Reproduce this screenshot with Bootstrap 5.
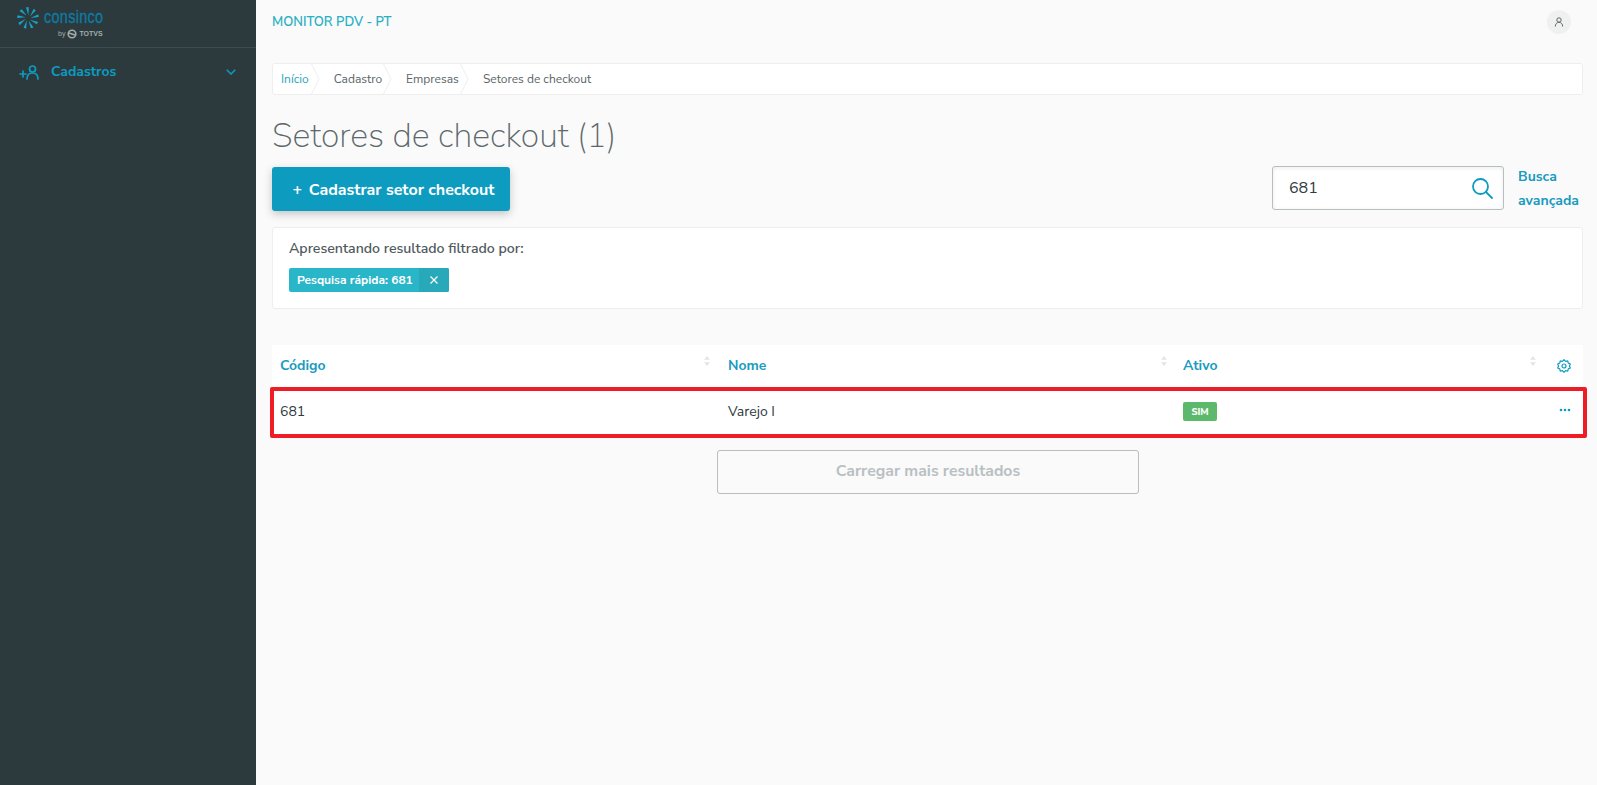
<!DOCTYPE html>
<html lang="pt">
<head>
<meta charset="utf-8">
<title>Setores de checkout</title>
<link href="https://cdn.jsdelivr.net/npm/bootstrap@5.3.0/dist/css/bootstrap.min.css" rel="stylesheet">
<style>
html,body{height:100%}
body{background:#fafafa;font-family:"Nunito Sans","Lato","Open Sans",sans-serif;color:#4a5558;font-size:14px;overflow:hidden}
.shell{height:785px}
.side{width:256px;flex:none;background:#2c3a3d}
.side-logo{height:48px;border-bottom:1px solid #3f4c4f;padding:7px 0 0 17px}
.logo-word{font-family:"Liberation Sans",sans-serif;font-size:19px;line-height:20px;color:#0f79a3;letter-spacing:.4px;margin-left:1px;transform:scaleX(.76);transform-origin:left center;-webkit-text-stroke:.35px #0f79a3}
.logo-sub{font-family:"Liberation Sans",sans-serif;font-size:7px;line-height:10px;color:#a5abac;padding-left:15px;font-weight:700;margin-top:2px;gap:2px}
.side-item{padding:13px 20px 0 19px;color:#0d9bc0;font-size:14px;font-weight:700}
.side-label{width:32px}
.main-area{padding:0 14px 0 16px;min-width:0}
.top-row{height:63px;padding-top:12px}
.app-title{font-size:13px;font-weight:600;color:#29b0c4;line-height:20px}
.avatar{width:24px;height:24px;border-radius:50%;background:#f0f0f0;margin:-2px 12px 0 0}
.crumbs{height:32px;background:#fff;border:1px solid #eeeeee;border-radius:3px;font-size:12px;overflow:hidden;margin:0}
.crumb{padding:0 10px 0 8px;line-height:30px;color:#5b6568;position:relative}
.crumb+.crumb{padding-left:14px}
.crumb-tip{position:absolute;right:-1px;top:-1px;width:10px;height:32px}
.crumb-first{color:#2aa3bd;padding-right:11px}
.page-title{font-size:34px;font-weight:200;color:#5d686b;line-height:44px;margin:19px 0 9px}
.act-add{width:238px;height:44px;background:#0d9bc0;color:#fff;font-size:16px;font-weight:700;border:0;border-radius:3px;box-shadow:0 3px 8px rgba(0,0,0,.22)}
.act-add:hover{background:#0d9bc0;color:#fff}
.act-add-in{padding:1px 0 0 5px}
.act-plus{margin-right:-2px}
.find{width:232px;height:44px;background:#fff;border:1px solid #b6bec0;border-radius:3px;padding:0 10px 0 16px;margin-top:-1px;box-shadow:inset 0 1px 4px rgba(0,0,0,.08);font-size:16px;color:#2f3a3d}
.find-more{width:65px;margin-left:14px;color:#1a9bc0;font-size:14px;font-weight:700;line-height:24px;margin-top:-2px}
.filter-box{height:82px;background:#fff;border:1px solid #eeeeee;border-radius:3px;margin-top:14px;padding:11px 16px}
.filter-title{font-size:14.100px;font-weight:600;color:#4f5a5d;line-height:20px}
.chip{margin-top:9px;height:24px;border-radius:2px;background:#29b6c8;color:#fff;font-size:12px;font-weight:700;line-height:24px;overflow:hidden;width:160px}
.chip-text{padding-left:8px;flex:1}
.chip-x{width:30px;background:#27a9ba}
.grid-wrap{margin-top:36px;position:relative}
.grid-table{table-layout:fixed;width:100%;margin:0;--bs-table-bg:#fff;--bs-table-color:#2f3a3d}
.grid-table th{height:43px;color:#1a9bc0;font-size:14px;font-weight:700;padding:0 12px 3px 8px;vertical-align:middle;border-bottom:0;position:relative}
.grid-table td{height:46px;padding:1px 12px 0 8px;vertical-align:middle;font-size:14px;border-bottom:1px solid #eeeeee}
.sorter{position:absolute;right:8px;top:11px;width:6px;height:10px}
.grid-table th:first-child .sorter{right:10px}
.tag-yes{background:#5cb96b;color:#fff;font-size:9.500px;font-weight:800;border-radius:2px;width:34px;height:19px;line-height:19px;text-align:center;margin-top:1px}
.row-dots{margin-bottom:4px}
.mark-box{position:absolute;left:-2px;right:-4px;top:42px;height:51px;border:4px solid #ee1c25;border-radius:2px;pointer-events:none}
.more-wrap{margin-top:15px;padding-left:445px}
.more-btn{width:422px;height:44px;background:transparent;border:1px solid #b6bec0;border-radius:3px;color:#b9c0c2;font-size:15.800px;font-weight:700}
</style>
</head>
<body>
<div class="d-flex shell">
  <aside class="side">
    <div class="side-logo d-flex">
      <svg width="22" height="22" viewBox="0 0 22 22" class="me-1 flex-shrink-0" fill="#19a3c9">
        <path id="ray" d="M11.400 8.500 9 .2l2.800.1z"/>
        <use href="#ray" transform="rotate(42 11 11)"/>
        <use href="#ray" transform="rotate(80 11 11)"/>
        <use href="#ray" transform="rotate(122 11 11)"/>
        <use href="#ray" transform="rotate(160 11 11)"/>
        <use href="#ray" transform="rotate(200 11 11)"/>
        <use href="#ray" transform="rotate(240 11 11)"/>
        <use href="#ray" transform="rotate(280 11 11)"/>
        <use href="#ray" transform="rotate(320 11 11)"/>
      </svg>
      <div>
        <div class="logo-word">consinco</div>
        <div class="logo-sub d-flex align-items-center"><span class="fw-normal">by</span>
          <svg width="10" height="10" viewBox="0 0 10 10" fill="none" stroke="#a5abac" stroke-width="1.600"><circle cx="5" cy="5" r="3.800"/><path d="M2 4 8 6"/></svg>
          <span>TOTVS</span></div>
      </div>
    </div>
    <div class="side-item d-flex align-items-center">
      <span class="side-label d-flex">
        <svg width="20" height="16" viewBox="0 0 20 16" fill="none" stroke="#0d9bc0" stroke-width="1.700" stroke-linecap="round"><path d="M1 10h6M4 7v6"/><circle cx="13.500" cy="5" r="3"/><path d="M8 15c0-4 2.500-6 5.500-6s5.500 2 5.500 6"/></svg>
      </span>
      <span class="flex-grow-1">Cadastros</span>
      <svg width="10" height="6" viewBox="0 0 10 6" fill="none" stroke="#0d9bc0" stroke-width="1.500"><path d="M.7.7 5 5l4.300-4.300"/></svg>
    </div>
  </aside>
  <main class="flex-grow-1 main-area">
    <div class="top-row d-flex justify-content-between">
      <div class="app-title">MONITOR PDV - PT</div>
      <div class="avatar d-flex align-items-center justify-content-center">
        <svg width="10" height="10" viewBox="0 0 10 10" fill="none" stroke="#5d686b" stroke-width="1"><circle cx="5" cy="3" r="2.200"/><path d="M1.300 9.500C1.300 7 3 5.300 5 5.300S8.700 7 8.700 9.500"/></svg>
      </div>
    </div>
    <nav class="crumbs d-flex">
      <span class="crumb crumb-first">Início<svg class="crumb-tip" viewBox="0 0 10 32" fill="none" stroke="#eeeeee"><path d="M0 0 8 16 0 32"/></svg></span>
      <span class="crumb">Cadastro<svg class="crumb-tip" viewBox="0 0 10 32" fill="none" stroke="#eeeeee"><path d="M0 0 8 16 0 32"/></svg></span>
      <span class="crumb">Empresas<svg class="crumb-tip" viewBox="0 0 10 32" fill="none" stroke="#eeeeee"><path d="M0 0 8 16 0 32"/></svg></span>
      <span class="crumb">Setores de checkout</span>
    </nav>
    <h1 class="page-title">Setores de checkout (1)</h1>
    <div class="d-flex justify-content-between">
      <button type="button" class="btn act-add p-0"><span class="act-add-in d-block"><span class="act-plus">+</span>&nbsp; Cadastrar setor checkout</span></button>
      <div class="d-flex">
        <div class="find d-flex align-items-center justify-content-between">
          <span>681</span>
          <svg width="22" height="22" viewBox="0 0 22 22" fill="none" stroke="#0d9bc0" stroke-width="1.800" stroke-linecap="round"><circle cx="9.500" cy="9.500" r="7.500"/><path d="M15 15l6 6"/></svg>
        </div>
        <div class="find-more">Busca avançada</div>
      </div>
    </div>
    <section class="filter-box">
      <div class="filter-title">Apresentando resultado filtrado por:</div>
      <div class="chip d-flex">
        <span class="chip-text text-nowrap">Pesquisa rápida: 681</span>
        <span class="chip-x d-flex align-items-center justify-content-center">
          <svg width="8" height="8" viewBox="0 0 8 8" stroke="#fff" stroke-width="1.200"><path d="M.5.5l7 7M7.500.5l-7 7"/></svg>
        </span>
      </div>
    </section>
    <div class="grid-wrap">
      <table class="table grid-table">
        <colgroup><col style="width:448px"><col style="width:455px"><col style="width:369px"><col></colgroup>
        <thead>
          <tr>
            <th>Código<svg class="sorter" viewBox="0 0 7 12" fill="#e2e5e6"><path d="M3.500 0 7 4.500H0zM3.500 12 0 7.500h7z"/></svg></th>
            <th>Nome<svg class="sorter" viewBox="0 0 7 12" fill="#e2e5e6"><path d="M3.500 0 7 4.500H0zM3.500 12 0 7.500h7z"/></svg></th>
            <th>Ativo<svg class="sorter" viewBox="0 0 7 12" fill="#e2e5e6"><path d="M3.500 0 7 4.500H0zM3.500 12 0 7.500h7z"/></svg></th>
            <th class="text-end">
              <svg width="14" height="14" viewBox="0 0 14 14" fill="none" stroke="#0d9bc0" stroke-width="1.200"><circle cx="7" cy="7" r="2"/><path d="M7 .7l1.500 1.600 2.200-.3.600 2.100 2 1L12.400 7l.9 1.900-2 1-.6 2.100-2.200-.3L7 13.300l-1.500-1.600-2.200.3-.6-2.100-2-1L1.600 7 .7 5.100l2-1L3.300 2l2.200.3z"/></svg>
            </th>
          </tr>
        </thead>
        <tbody>
          <tr>
            <td>681</td>
            <td>Varejo I</td>
            <td><div class="tag-yes">SIM</div></td>
            <td class="text-end">
              <svg width="12" height="4" viewBox="0 0 12 4" fill="#0d9bc0" class="row-dots"><circle cx="2" cy="2" r="1.300"/><circle cx="6" cy="2" r="1.300"/><circle cx="10" cy="2" r="1.300"/></svg>
            </td>
          </tr>
        </tbody>
      </table>
      <div class="mark-box"></div>
    </div>
    <div class="more-wrap">
      <button type="button" class="btn more-btn p-0">Carregar mais resultados</button>
    </div>
  </main>
</div>
<script src="https://cdn.jsdelivr.net/npm/bootstrap@5.3.0/dist/js/bootstrap.bundle.min.js"></script>
</body>
</html>
